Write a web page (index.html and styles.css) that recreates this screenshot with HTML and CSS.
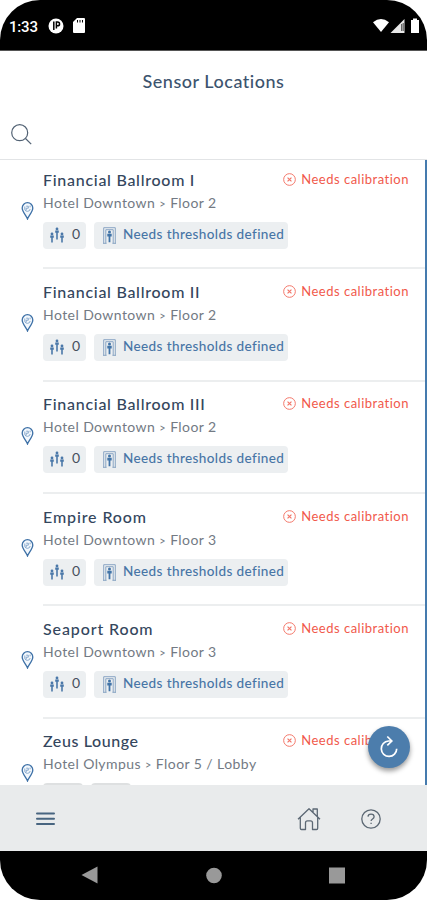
FILE: index.html
```html
<!DOCTYPE html>
<html lang="en">
<head>
<meta charset="utf-8">
<title>Sensor Locations</title>
<link rel="stylesheet" href="styles.css">
</head>
<body>
<svg class="defs" aria-hidden="true">
  <symbol id="pin" viewBox="0 0 12 18"><path d="M6 17C4.600 13.500.700 9.700.700 6a5.300 5.300 0 0 1 10.600 0C11.300 9.700 7.400 13.500 6 17Z" fill="#f3f8fd" stroke="#3d70a6" stroke-width="1.300"/><path d="M3.300 4.500v3a2.800 2.800 0 0 0 5.400-.500M4.700 4.200h2.100v2H4.700v2M8.600 3.600v1.700" fill="none" stroke="#7198c1" stroke-width=".8"/></symbol>
  <symbol id="people" viewBox="0 0 14 16"><g fill="#4b78a9"><circle cx="2" cy="7" r="1.400"/><path d="M.2 8.500h3.600v2.300h-1V15.500H1.200v-4.700h-1Z"/><circle cx="7" cy="2" r="1.400"/><path d="M5.200 3.500h3.600v2.300h-1v6.700H6.200V5.800h-1Z"/><circle cx="12" cy="7" r="1.400"/><path d="M10.200 8.500h3.600v2.300h-1v4.700h-1.600v-4.700h-1Z"/></g></symbol>
  <symbol id="door" viewBox="0 0 13 17"><path d="M.7 16.500V.7h11.600v15.800M2.800 16.500V2.700h7.400v13.800M0 16.300h3.500M9.500 16.300H13" fill="none" stroke="#8aa6c4" stroke-width="1"/><circle cx="6.500" cy="5" r="1.500" fill="#4174a8"/><path d="M4.300 6.800h4.400v2.800H7.400v5.600H5.600V9.600H4.300Z" fill="#4174a8"/></symbol>
  <symbol id="alert" viewBox="0 0 12 12"><g fill="none" stroke="#f37568"><circle cx="6" cy="6" r="5.400" stroke-width=".9"/><path d="m4.200 4.200 3.600 3.600m0-3.600L4.200 7.800" stroke-width="1.100"/></g></symbol>
</svg>
<div class="phone">
  <header class="status">
    <span class="time">1:33</span>
    <svg class="app" viewBox="0 0 16 16"><circle cx="8" cy="8" r="7.500" fill="#fff"/><path d="M5.800 3.500v8.500M8.400 10.500V4h1.200c2.600 0 2.600 3.800 0 3.800H8.400" fill="none" stroke="#000" stroke-width="1.500"/></svg>
    <svg class="card" viewBox="0 0 12 15"><path d="M4 0h7a1 1 0 0 1 1 1v13a1 1 0 0 1-1 1H1a1 1 0 0 1-1-1V4Z" fill="#fff"/><path d="M4.500 2v2.500M7 2v2.500M9.500 2v2.500" stroke="#000"/></svg>
    <svg class="signals" viewBox="0 0 48 16"><path d="M0 4.200Q8 -2.200 16 4.200L8 14Z" fill="#fff"/><path d="M31.500 1v14h-14Z" fill="#e8e8e8"/><path d="M28.700 6v7M30.200 5v8" stroke="#222" stroke-width=".8"/><path d="M38 2h2V.5h4V2h2v13h-8V2Z" fill="#fff"/></svg>
  </header>
  <div class="top">
    <h1>Sensor Locations</h1>
    <svg class="search" viewBox="0 0 21 21"><circle cx="8.700" cy="8.700" r="8" /><path d="m14.500 14.500 5.700 5.700"/></svg>
  </div>
  <main class="list">
    <article class="row"><svg class="pin"><use href="#pin"/></svg><div class="body"><div class="head"><h2>Financial Ballroom I</h2><span class="alert"><svg><use href="#alert"/></svg><span>Needs calibration</span></span></div><p>Hotel Downtown <i>&gt;</i> Floor 2</p><div class="chips"><span class="chip count"><svg class="people"><use href="#people"/></svg><span>0</span></span><span class="chip limits"><svg class="door"><use href="#door"/></svg><span>Needs thresholds defined</span></span></div></div></article>
    <article class="row"><svg class="pin"><use href="#pin"/></svg><div class="body"><div class="head"><h2>Financial Ballroom II</h2><span class="alert"><svg><use href="#alert"/></svg><span>Needs calibration</span></span></div><p>Hotel Downtown <i>&gt;</i> Floor 2</p><div class="chips"><span class="chip count"><svg class="people"><use href="#people"/></svg><span>0</span></span><span class="chip limits"><svg class="door"><use href="#door"/></svg><span>Needs thresholds defined</span></span></div></div></article>
    <article class="row"><svg class="pin"><use href="#pin"/></svg><div class="body"><div class="head"><h2>Financial Ballroom III</h2><span class="alert"><svg><use href="#alert"/></svg><span>Needs calibration</span></span></div><p>Hotel Downtown <i>&gt;</i> Floor 2</p><div class="chips"><span class="chip count"><svg class="people"><use href="#people"/></svg><span>0</span></span><span class="chip limits"><svg class="door"><use href="#door"/></svg><span>Needs thresholds defined</span></span></div></div></article>
    <article class="row"><svg class="pin"><use href="#pin"/></svg><div class="body"><div class="head"><h2 class="loose">Empire Room</h2><span class="alert"><svg><use href="#alert"/></svg><span>Needs calibration</span></span></div><p>Hotel Downtown <i>&gt;</i> Floor 3</p><div class="chips"><span class="chip count"><svg class="people"><use href="#people"/></svg><span>0</span></span><span class="chip limits"><svg class="door"><use href="#door"/></svg><span>Needs thresholds defined</span></span></div></div></article>
    <article class="row"><svg class="pin"><use href="#pin"/></svg><div class="body"><div class="head"><h2 class="loose">Seaport Room</h2><span class="alert"><svg><use href="#alert"/></svg><span>Needs calibration</span></span></div><p>Hotel Downtown <i>&gt;</i> Floor 3</p><div class="chips"><span class="chip count"><svg class="people"><use href="#people"/></svg><span>0</span></span><span class="chip limits"><svg class="door"><use href="#door"/></svg><span>Needs thresholds defined</span></span></div></div></article>
    <article class="row"><svg class="pin"><use href="#pin"/></svg><div class="body"><div class="head"><h2 class="tight">Zeus Lounge</h2><span class="alert"><svg><use href="#alert"/></svg><span>Needs calibration</span></span></div><p>Hotel Olympus <i>&gt;</i> Floor 5 / Lobby</p><div class="chips"><span class="chip stub"></span><span class="chip stub"></span></div></div></article>
    <button class="refresh" aria-label="Refresh"><svg viewBox="0 0 22 24"><path d="M12.500 6H10.500a7.700 7.700 0 1 0 8.200 7.700M9.300 1.500l4.500 4.500-4.500 4.300"/></svg></button>
  </main>
  <nav class="tabs">
    <svg class="menu" viewBox="0 0 20 14"><path d="M1 1.500h17M1 6.700h17M1 11.900h17"/></svg>
    <svg class="home" viewBox="0 0 24 24"><path d="M1 12.300 12 1.700l11 10.600M3.300 10.500v10.800c0 .8.500 1.200 1.200 1.200h4v-6.700c0-1.300.7-2 2-2h3c1.300 0 2 .7 2 2v6.700h4c.7 0 1.200-.4 1.200-1.200V10.500M16 5.300V2h4.300v7.500"/></svg>
    <svg class="help" viewBox="0 0 20 20"><circle cx="10" cy="10" r="9.200"/><path d="M7 7.600c.2-3.500 6.100-3.300 6.100.1 0 2.200-3 2.200-3 4.300M10.100 13.700v1.300"/></svg>
  </nav>
  <footer class="system">
    <svg viewBox="0 0 18 20"><path d="M16.500 1.500v17L.5 10Z"/></svg>
    <svg viewBox="0 0 18 20"><circle cx="9" cy="10.500" r="7.800"/></svg>
    <svg viewBox="0 0 18 20"><path d="M1 2.500h16v16H1Z"/></svg>
  </footer>
</div>
</body>
</html>
```
FILE: styles.css
```css
* { box-sizing: border-box; }
body { margin: 0; background: #fff; font-family: Lato, "Liberation Sans", sans-serif; }
svg { display: block; flex: none; }
h1, h2, p { margin: 0; white-space: nowrap; }
.defs { position: absolute; width: 0; height: 0; }
.phone { width: 427px; height: 900px; display: flex; flex-direction: column; overflow: hidden; border-radius: 40px; background: #fff; }

.status { height: 51px; flex: none; background: #000; display: flex; align-items: flex-start; padding: 18px 6px 0 9px; border-bottom: 1px solid #555; }
.time { width: 39px; color: #fff; font: 500 15px/18px Roboto, sans-serif; letter-spacing: -.2px; }
.app { width: 16px; height: 16px; }
.card { width: 12px; height: 15px; margin: 0 0 0 9px; }
.signals { width: 48px; height: 16px; margin-left: auto; }

.top { height: 109px; flex: none; border-bottom: 1px solid #e2e4e6; padding-top: 18px; }
h1 { text-align: center; color: #3d546e; font-size: 18px; line-height: 24px; font-weight: 500; letter-spacing: .52px; }
.search { width: 21px; height: 21px; margin: 31px 0 0 11px; fill: none; stroke: #526274; stroke-width: 1.2; }

.list { position: relative; height: 625px; flex: none; overflow: hidden; border-right: 2px solid #457bae; }
.row { height: 112.33px; display: flex; padding-left: 21px; }
.row:first-child { margin-top: -3px; }
.pin { width: 13px; height: 18px; margin: 45px 9px 0 0; }
.body { flex: 1; padding-top: 11.6px; border-bottom: 2px solid #eceeef; }
.head { height: 23px; display: flex; justify-content: space-between; padding-right: 16px; }
h2 { color: #34465d; font-size: 16px; line-height: 22px; font-weight: 500; letter-spacing: .72px; }
.loose { letter-spacing: .88px; }
.tight { letter-spacing: .6px; }
.alert { display: flex; gap: 5px; color: #f1594b; font-size: 13px; line-height: 20px; letter-spacing: .5px; white-space: nowrap; }
.alert svg { width: 13px; height: 13px; margin-top: 4px; }
p { height: 30px; color: #737a84; font-size: 14px; line-height: 21px; letter-spacing: .43px; }
i { font-size: 11px; font-style: normal; }
.chips { display: flex; gap: 8px; }
.chip { height: 27px; display: flex; border-radius: 4px; background: #eceff1; color: #4775a6; white-space: nowrap; }
.count { width: 43px; padding: 0 0 0 7px; gap: 8px; color: #46505d; font-size: 14px; line-height: 24px; }
.people { width: 14px; height: 16px; margin-top: 5px; }
.limits { width: 194px; padding-left: 9px; gap: 7px; font-size: 13.5px; line-height: 24px; font-weight: 500; letter-spacing: .4px; }
.door { width: 13px; height: 17px; margin-top: 5px; }
.stub { width: 40px; background: #dee0e1; }
.refresh { position: absolute; left: 368px; top: 566px; width: 42px; height: 42px; padding: 0; border: 0; border-radius: 50%; background: #4c7dac; box-shadow: 0 3px 5px #0006; display: grid; place-items: center; }
.refresh svg { width: 22px; height: 24px; fill: none; stroke: #fff; stroke-width: 1.7; }

.tabs { height: 66px; flex: none; display: flex; align-items: center; background: #e9ebec; padding: 2px 46px 0 36px; }
.tabs svg { fill: none; stroke: #5c6874; stroke-width: 1.3; stroke-linejoin: round; }
.tabs .menu { width: 20px; height: 14px; stroke: #486580; stroke-width: 2; stroke-linecap: round; }
.home { width: 24px; height: 24px; margin-left: auto; }
.help { width: 20px; height: 20px; margin-left: 40px; }
.system { flex: 1; background: #000; display: flex; justify-content: space-between; padding: 14px 81px 0; }
.system svg { width: 18px; height: 20px; fill: #999; }
```
